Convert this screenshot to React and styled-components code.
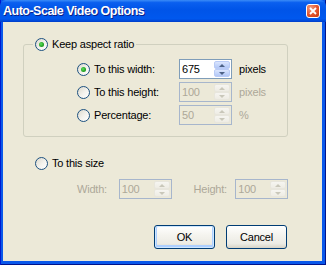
import React from "react";
import styled, { createGlobalStyle, css } from "styled-components";

const GlobalStyle = createGlobalStyle`
  html, body {
    margin: 0;
    padding: 0;
    background: #ece9d8;
  }
  * {
    box-sizing: border-box;
  }
`;

const Window = styled.div`
  width: 326px;
  height: 265px;
  display: flex;
  flex-direction: column;
  background: #0a58ea;
  box-shadow: inset 1px 0 #0019cf, inset -1px 0 #00138c, inset 0 -1px #00138c;
  font-family: "Liberation Sans", Arial, sans-serif;
  font-size: 11px;
  letter-spacing: -0.2px;
  color: #000;
`;

const TitleBar = styled.div`
  height: 22px;
  flex: none;
  display: flex;
  align-items: center;
  justify-content: space-between;
  padding: 0 6px 0 3px;
  background: linear-gradient(
    to bottom,
    #3b8cf7 0%,
    #0a5fef 12%,
    #0054e8 45%,
    #0058ee 85%,
    #0048d8 95%,
    #003dc8 100%
  );
  border-radius: 6px 6px 0 0;
  color: #fff;
  font-weight: bold;
  font-size: 12.5px;
  letter-spacing: -0.5px;
  text-shadow: 1px 1px #0a1e86;
`;

const CloseButton = styled.div`
  width: 14px;
  height: 14px;
  border: 1px solid #fff;
  border-radius: 3px;
  background: radial-gradient(circle at 30% 25%, #f29a7c 0%, #e4542c 55%, #c8380c 100%);
  display: flex;
  align-items: center;
  justify-content: center;
  svg {
    display: block;
  }
`;

const Body = styled.div`
  flex: 1;
  margin: 0 4px 4px 3px;
  background: #ece9d8;
  padding: 16px 34px 0 20px;
  display: flex;
  flex-direction: column;
`;

const Group = styled.fieldset`
  margin: 0;
  padding: 8px 0 11px 0;
  border: 1px solid #d0d0bf;
  border-radius: 3px;
  min-width: 0;
`;

const Legend = styled.legend`
  margin-left: 9px;
  padding: 0 2px;
`;

const Options = styled.div`
  margin-left: 53px;
  display: flex;
  flex-direction: column;
  gap: 3px;
`;

const RadioLabel = styled.label`
  display: flex;
  align-items: center;
  gap: 4px;
  line-height: 13px;
  white-space: nowrap;
`;

const Circle = styled.span`
  width: 13px;
  height: 13px;
  flex: none;
  border-radius: 50%;
  border: 1px solid #1c5180;
  background: linear-gradient(135deg, #dcd9cd 0%, #f4f3ee 55%, #ffffff 100%);
  position: relative;
  ${(p) =>
    p.$checked &&
    css`
      &::after {
        content: "";
        position: absolute;
        left: 3px;
        top: 3px;
        width: 5px;
        height: 5px;
        border-radius: 50%;
        background: radial-gradient(circle at 40% 40%, #5ee05e 0%, #21a121 60%, #178017 100%);
      }
    `}
`;

const Radio = ({ checked, children }) => (
  <RadioLabel>
    <Circle $checked={checked} />
    <span>{children}</span>
  </RadioLabel>
);

const OptionRow = styled.div`
  display: grid;
  grid-template-columns: 95px 53px auto;
  column-gap: 7px;
  align-items: center;
  height: 20px;
`;

const Unit = styled.span`
  color: ${(p) => (p.$disabled ? "#aca899" : "#000")};
`;

const SpinFrame = styled.div`
  width: 53px;
  height: 20px;
  display: flex;
  border: 1px solid ${(p) => (p.$disabled ? "#a7b6cc" : "#7f9db9")};
  background: ${(p) => (p.$disabled ? "#ece9d8" : "#fff")};
`;

const SpinValue = styled.span`
  flex: 1;
  padding-left: 2px;
  line-height: 18px;
  color: ${(p) => (p.$disabled ? "#aca899" : "#000")};
`;

const SpinButtons = styled.div`
  width: 17px;
  display: grid;
  grid-template-rows: 1fr 1fr;
  padding: 1px 1px 1px 0;
`;

const SpinButton = styled.div`
  border-radius: 2px;
  border: 1px solid ${(p) => (p.$disabled ? "#e8e6dd" : "#b9cbf6")};
  background: ${(p) =>
    p.$disabled
      ? "linear-gradient(#f6f5f1, #eeece4)"
      : "linear-gradient(#dbe5fd, #c1d3fa 60%, #b3c7f5)"};
  display: flex;
  align-items: center;
  justify-content: center;
  &::after {
    content: "";
    width: 0;
    height: 0;
    border-left: 3px solid transparent;
    border-right: 3px solid transparent;
    ${(p) =>
      p.$down
        ? css`
            border-top: 3px solid ${p.$disabled ? "#c9c7ba" : "#4d6185"};
          `
        : css`
            border-bottom: 3px solid ${p.$disabled ? "#c9c7ba" : "#4d6185"};
          `}
  }
`;

const SpinBox = ({ value, disabled }) => (
  <SpinFrame $disabled={disabled}>
    <SpinValue $disabled={disabled}>{value}</SpinValue>
    <SpinButtons>
      <SpinButton $disabled={disabled} />
      <SpinButton $disabled={disabled} $down />
    </SpinButtons>
  </SpinFrame>
);

const SizeRadio = styled.div`
  margin: 20px 0 0 12px;
`;

const SizeRow = styled.div`
  display: flex;
  align-items: center;
  margin: 9px 0 0 54px;
  height: 20px;
`;

const FieldLabel = styled.span`
  width: 42px;
  color: #aca899;
  margin-left: ${(p) => p.$offset || 0}px;
`;

const ButtonRow = styled.div`
  display: flex;
  justify-content: flex-end;
  gap: 11px;
  margin-top: 26px;
`;

const Button = styled.button`
  width: 61px;
  height: 24px;
  margin: 0;
  padding: 0;
  font-family: inherit;
  font-size: 11px;
  letter-spacing: -0.2px;
  color: #000;
  border: 1px solid #003c74;
  border-radius: 3px;
  background: linear-gradient(#ffffff 0%, #f5f4ef 40%, #ecebe4 80%, #d8d3c6 100%);
  ${(p) =>
    p.$default &&
    css`
      box-shadow: inset 0 0 0 1px #cee7ff, inset 0 -1px 0 2px #adcfff,
        inset 1px 0 0 1px #b9d1f8;
    `}
`;

export default function App() {
  return (
    <>
      <GlobalStyle />
      <Window>
        <TitleBar>
          <span>Auto-Scale Video Options</span>
          <CloseButton>
            <svg width="8" height="8" viewBox="0 0 8 8">
              <path d="M1 1 L7 7 M7 1 L1 7" stroke="#fff" strokeWidth="1.8" />
            </svg>
          </CloseButton>
        </TitleBar>
        <Body>
          <Group>
            <Legend>
              <Radio checked>Keep aspect ratio</Radio>
            </Legend>
            <Options>
              <OptionRow>
                <Radio checked>To this width:</Radio>
                <SpinBox value="675" />
                <Unit>pixels</Unit>
              </OptionRow>
              <OptionRow>
                <Radio>To this height:</Radio>
                <SpinBox value="100" disabled />
                <Unit $disabled>pixels</Unit>
              </OptionRow>
              <OptionRow>
                <Radio>Percentage:</Radio>
                <SpinBox value="50" disabled />
                <Unit $disabled>%</Unit>
              </OptionRow>
            </Options>
          </Group>
          <SizeRadio>
            <Radio>To this size</Radio>
          </SizeRadio>
          <SizeRow>
            <FieldLabel>Width:</FieldLabel>
            <SpinBox value="100" disabled />
            <FieldLabel $offset={22}>Height:</FieldLabel>
            <SpinBox value="100" disabled />
          </SizeRow>
          <ButtonRow>
            <Button $default>OK</Button>
            <Button style={{ marginRight: 1 }}>Cancel</Button>
          </ButtonRow>
        </Body>
      </Window>
    </>
  );
}
